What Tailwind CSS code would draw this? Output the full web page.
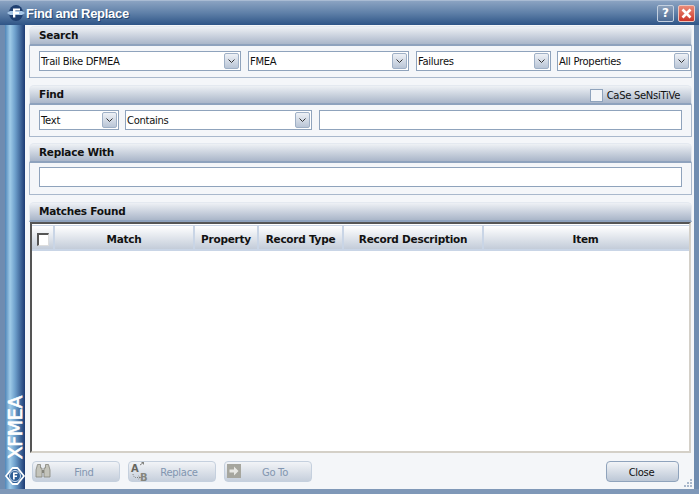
<!DOCTYPE html>
<html lang="en">
<head>
<meta charset="UTF-8" />
<title>Find and Replace</title>
<script src="https://cdn.jsdelivr.net/npm/@tailwindcss/browser@4"></script>
</head>
<body class="m-0 overflow-hidden bg-white">
<!-- window -->
<div class="w-[699px] h-[494px] relative flex flex-col overflow-hidden font-['DejaVu_Sans',sans-serif] text-[10px] tracking-[-0.3px] text-[#111] bg-[#f4f6f9]">

  <!-- title bar -->
  <div class="h-[25px] shrink-0 flex items-center pl-[6px] pr-[4px] border-t border-[#a9bbd3] bg-gradient-to-b from-[#8ba3c2] via-[#5f80a8] to-[#2f5587]">
    <svg width="20" height="18" viewBox="0 0 20 18" class="shrink-0">
      <ellipse cx="10" cy="9" rx="7" ry="8" fill="#1f3f70"/>
      <path d="M1 9 L4 7 H16 L19 9 L16 11 H4 Z" fill="#a9c8e8"/>
      <path d="M7 4.500 H14 V6.500 H9.300 V8 H13 V10 H9.300 V13.500 H7 Z" fill="#fff"/>
    </svg>
    <span class="pt-[1px] text-white font-['Liberation_Sans',sans-serif] font-bold text-[13px] tracking-[-0.3px] [text-shadow:1px_1px_0_#244670]">Find and Replace</span>
    <div class="ml-auto flex gap-[4px]">
      <div class="w-[17px] h-[17px] rounded-[2px] border border-[#c3d0e0] bg-gradient-to-b from-[#8ca0bb] to-[#4d6c95] flex items-center justify-center text-white font-bold text-[12px] tracking-normal">?</div>
      <div class="w-[17px] h-[17px] rounded-[2px] border border-[#eec4bc] bg-gradient-to-b from-[#e98a78] to-[#cc3328] flex items-center justify-center">
        <svg width="11" height="11" viewBox="0 0 11 11"><path d="M1.500 1.500 L9.500 9.500 M9.500 1.500 L1.500 9.500" stroke="#fff" stroke-width="2.600"/></svg>
      </div>
    </div>
  </div>

  <div class="flex-1 min-h-0 flex">
    <!-- left strip -->
    <div class="w-[25px] shrink-0 flex flex-col items-center justify-end pb-[3px] border-l-[5px] border-[#6f8cb0] bg-[linear-gradient(to_right,#4f86b8,#9fcbe8_25%,#6fa1cd_50%,#1c3a73)]">
      <span class="[writing-mode:vertical-rl] rotate-180 text-white font-['DejaVu_Sans',sans-serif] text-[19px] tracking-[-0.4px] leading-[20px] [-webkit-text-stroke:0.6px_white]">XFMEA</span>
      <svg width="20" height="20" viewBox="0 0 20 20" class="mt-[7px] shrink-0">
        <path d="M7.500 2 H12.500 L19 10 L12.500 18 H7.500 L1 10 Z" fill="#2f5f96" stroke="#fff" stroke-width="1.800" stroke-linejoin="round"/>
        <circle cx="10" cy="10" r="5.500" fill="none" stroke="#cfe0f2" stroke-width="1"/>
        <path d="M8 6.500 H12.500 V8 H9.700 V9.500 H12 V11 H9.700 V13.500 H8 Z" fill="#fff"/>
      </svg>
    </div>

    <!-- content -->
    <div class="flex-1 min-w-0 flex flex-col pl-[4px] pr-[2px]">

      <!-- Search -->
      <section class="mt-[1px] h-[52px] shrink-0 flex flex-col">
        <div class="h-[20px] shrink-0 flex items-center pl-[9px] pt-[1px] rounded-t-[5px] border border-b-2 border-[#e4e9f0] border-b-[#8ea2bd] bg-gradient-to-b from-[#eef1f5] to-[#aab6c9] font-bold text-[10.500px] tracking-[-0.25px]">Search</div>
        <div class="flex-1 flex gap-[7px] pl-[9px] pt-[5px] border-x border-b border-[#a9b8cc]">
          <div class="w-[202px] h-[20px] shrink-0 flex items-center border border-[#8fa3bc] bg-white pl-[1px]">
            <span class="flex-1 pt-[1px]">Trail Bike DFMEA</span>
            <div class="w-[15px] h-[16px] mr-[1px] rounded-[2px] border border-[#9fb0c6] bg-gradient-to-b from-[#eef1f6] to-[#b9c5d6] flex items-center justify-center"><svg width="7" height="4" viewBox="0 0 7 4"><path d="M.5 .5 L3.500 3.500 L6.500 .5" fill="none" stroke="#333"/></svg></div>
          </div>
          <div class="w-[161px] h-[20px] shrink-0 flex items-center border border-[#8fa3bc] bg-white pl-[1px]">
            <span class="flex-1 pt-[1px]">FMEA</span>
            <div class="w-[15px] h-[16px] mr-[1px] rounded-[2px] border border-[#9fb0c6] bg-gradient-to-b from-[#eef1f6] to-[#b9c5d6] flex items-center justify-center"><svg width="7" height="4" viewBox="0 0 7 4"><path d="M.5 .5 L3.500 3.500 L6.500 .5" fill="none" stroke="#333"/></svg></div>
          </div>
          <div class="w-[135px] h-[20px] shrink-0 flex items-center border border-[#8fa3bc] bg-white pl-[1px]">
            <span class="flex-1 pt-[1px]">Failures</span>
            <div class="w-[15px] h-[16px] mr-[1px] rounded-[2px] border border-[#9fb0c6] bg-gradient-to-b from-[#eef1f6] to-[#b9c5d6] flex items-center justify-center"><svg width="7" height="4" viewBox="0 0 7 4"><path d="M.5 .5 L3.500 3.500 L6.500 .5" fill="none" stroke="#333"/></svg></div>
          </div>
          <div class="w-[134px] h-[20px] shrink-0 -ml-[1px] flex items-center border border-[#8fa3bc] bg-white pl-[1px]">
            <span class="flex-1 pt-[1px]">All Properties</span>
            <div class="w-[15px] h-[16px] mr-[1px] rounded-[2px] border border-[#9fb0c6] bg-gradient-to-b from-[#eef1f6] to-[#b9c5d6] flex items-center justify-center"><svg width="7" height="4" viewBox="0 0 7 4"><path d="M.5 .5 L3.500 3.500 L6.500 .5" fill="none" stroke="#333"/></svg></div>
          </div>
        </div>
      </section>

      <!-- Find -->
      <section class="mt-[7px] h-[52px] shrink-0 flex flex-col">
        <div class="h-[20px] shrink-0 flex items-center pl-[9px] pr-[11px] pt-[1px] rounded-t-[5px] border border-b-2 border-[#e4e9f0] border-b-[#8ea2bd] bg-gradient-to-b from-[#eef1f5] to-[#aab6c9] font-bold text-[10.500px] tracking-[-0.25px]">
          <span>Find</span>
          <div class="ml-auto flex items-center gap-[4px] font-normal text-[10px] tracking-[-0.3px]">
            <div class="w-[13px] h-[13px] border border-[#8fa3bc] bg-[#f3f5f8]"></div>
            <span>CaSe SeNsiTiVe</span>
          </div>
        </div>
        <div class="flex-1 flex pl-[9px] pr-[9px] pt-[5px] border-x border-b border-[#a9b8cc]">
          <div class="w-[80px] h-[20px] shrink-0 flex items-center border border-[#8fa3bc] bg-white pl-[1px]">
            <span class="flex-1 pt-[1px]">Text</span>
            <div class="w-[15px] h-[16px] mr-[1px] rounded-[2px] border border-[#9fb0c6] bg-gradient-to-b from-[#eef1f6] to-[#b9c5d6] flex items-center justify-center"><svg width="7" height="4" viewBox="0 0 7 4"><path d="M.5 .5 L3.500 3.500 L6.500 .5" fill="none" stroke="#333"/></svg></div>
          </div>
          <div class="w-[187px] h-[20px] shrink-0 ml-[6px] flex items-center border border-[#8fa3bc] bg-white pl-[1px]">
            <span class="flex-1 pt-[1px]">Contains</span>
            <div class="w-[15px] h-[16px] mr-[1px] rounded-[2px] border border-[#9fb0c6] bg-gradient-to-b from-[#eef1f6] to-[#b9c5d6] flex items-center justify-center"><svg width="7" height="4" viewBox="0 0 7 4"><path d="M.5 .5 L3.500 3.500 L6.500 .5" fill="none" stroke="#333"/></svg></div>
          </div>
          <div class="flex-1 h-[20px] ml-[7px] border border-[#8fa3bc] bg-white"></div>
        </div>
      </section>

      <!-- Replace With -->
      <section class="mt-[6px] h-[52px] shrink-0 flex flex-col">
        <div class="h-[20px] shrink-0 flex items-center pl-[9px] pt-[1px] rounded-t-[5px] border border-b-2 border-[#e4e9f0] border-b-[#8ea2bd] bg-gradient-to-b from-[#eef1f5] to-[#aab6c9] font-bold text-[10.500px] tracking-[-0.25px]">Replace With</div>
        <div class="flex-1 pl-[9px] pr-[9px] pt-[4px] border-x border-b border-[#a9b8cc]">
          <div class="h-[20px] border border-[#8fa3bc] bg-white"></div>
        </div>
      </section>

      <!-- Matches Found -->
      <section class="mt-[7px] h-[251px] shrink-0 flex flex-col">
        <div class="h-[20px] shrink-0 flex items-center pl-[9px] pt-[1px] rounded-t-[5px] border border-b-2 border-[#e4e9f0] border-b-[#8ea2bd] bg-gradient-to-b from-[#eef1f5] to-[#aab6c9] font-bold text-[10.500px] tracking-[-0.25px]">Matches Found</div>
        <div class="flex-1 min-h-0 flex flex-col ml-[1px] mr-[1px] border-2 border-[#555] border-r-[#d4d0c8] border-b-[#d4d0c8] bg-white pt-[1px]">
          <div class="h-[26px] flex font-bold text-[10.500px] tracking-[-0.25px] border-b-2 border-t border-[#c9d5e6] bg-gradient-to-b from-white to-[#c3ccd9]">
            <div class="w-[23px] pt-[4px] flex items-center justify-center border-r-2 border-[#c9d5e6]"><div class="w-[12px] h-[13px] border border-l-2 border-t-2 border-[#555] border-r-[#ddd] border-b-[#ddd] bg-white"></div></div>
            <div class="w-[140px] pt-[4px] flex items-center justify-center border-r-2 border-[#c9d5e6]">Match</div>
            <div class="w-[64px] pt-[4px] flex items-center justify-center border-r-2 border-[#c9d5e6]">Property</div>
            <div class="w-[85px] pt-[4px] flex items-center justify-center border-r-2 border-[#c9d5e6]">Record Type</div>
            <div class="w-[140px] pt-[4px] flex items-center justify-center border-r-2 border-[#c9d5e6]">Record Description</div>
            <div class="flex-1 pt-[4px] pr-[2px] flex items-center justify-center">Item</div>
          </div>
        </div>
      </section>

      <!-- buttons -->
      <div class="flex-1 flex pl-[3px] pr-[13px] pt-[8px] text-[#8296b0]">
        <div class="w-[88px] h-[21px] pt-[1px] relative flex items-center justify-center rounded-[4px] border border-[#c5d0de] bg-gradient-to-b from-[#f2f4f7] to-[#c6cfdc]">
          <svg width="16" height="14" viewBox="0 0 16 14" class="absolute left-[2px] top-[2px]">
            <path d="M2.500 .5 H5.500 V4 H7 V13 H1 V6 Z M10.500 .5 H13.500 L15 6 V13 H9 V4 H10.500 Z" fill="#c4c4bb" stroke="#85857c" stroke-width=".8"/>
            <path d="M7 6 H9 V9 H7 Z" fill="#85857c"/>
          </svg>
          <span class="pl-[16px]">Find</span>
        </div>
        <div class="w-[88px] h-[21px] pt-[1px] ml-[8px] relative flex items-center justify-center rounded-[4px] border border-[#c5d0de] bg-gradient-to-b from-[#f2f4f7] to-[#c6cfdc]">
          <span class="absolute left-[2px] -top-[1px] text-[10px] font-bold text-[#66665f]">A</span>
          <span class="absolute left-[11px] top-[8px] text-[10px] font-bold text-[#85857c]">B</span>
          <svg width="18" height="18" viewBox="0 0 18 18" class="absolute left-[1px] top-[0px]">
            <path d="M10 3 L13.500 .5 M11.500 .5 H13.500 V2.500" fill="none" stroke="#66665f" stroke-width=".8"/>
            <path d="M3 12 Q3.500 16 7 15.500 H10 M8.500 14 L10.500 15.500 L8.500 17" fill="none" stroke="#66665f" stroke-width=".8" stroke-dasharray="1 1"/>
          </svg>
          <span class="pl-[14px]">Replace</span>
        </div>
        <div class="w-[88px] h-[21px] pt-[1px] ml-[8px] relative flex items-center justify-center rounded-[4px] border border-[#c5d0de] bg-gradient-to-b from-[#f2f4f7] to-[#c6cfdc]">
          <svg width="14" height="14" viewBox="0 0 14 14" class="absolute left-[2px] top-[2px]"><rect width="14" height="14" fill="#a6a69e"/><path d="M2.500 5.500 H7 V2.500 L11.500 7 L7 11.500 V8.500 H2.500 Z" fill="#e8e8e4"/></svg>
          <span class="pl-[14px]">Go To</span>
        </div>
        <div class="w-[73px] h-[21px] pt-[1px] pr-[2px] ml-auto flex items-center justify-center rounded-[4px] border border-[#8fa3bc] bg-gradient-to-b from-[#f2f4f7] to-[#bcc7d6] text-[#111]">Close</div>
      </div>
    </div>

    <!-- right edge -->
    <div class="w-[5px] shrink-0 bg-[#6f8cb0]"></div>
  </div>

  <!-- bottom edge -->
  <div class="h-[5px] shrink-0 bg-[#7f98b8]"></div>

  <!-- resize grip -->
  <svg width="10" height="10" viewBox="0 0 10 10" class="absolute left-[683px] top-[479px]">
    <path d="M7 0h2v2h-2z M4 3h2v2h-2z M7 3h2v2h-2z M1 6h2v2h-2z M4 6h2v2h-2z M7 6h2v2h-2z" fill="#a9b8cc"/>
  </svg>
</div>
</body>
</html>
